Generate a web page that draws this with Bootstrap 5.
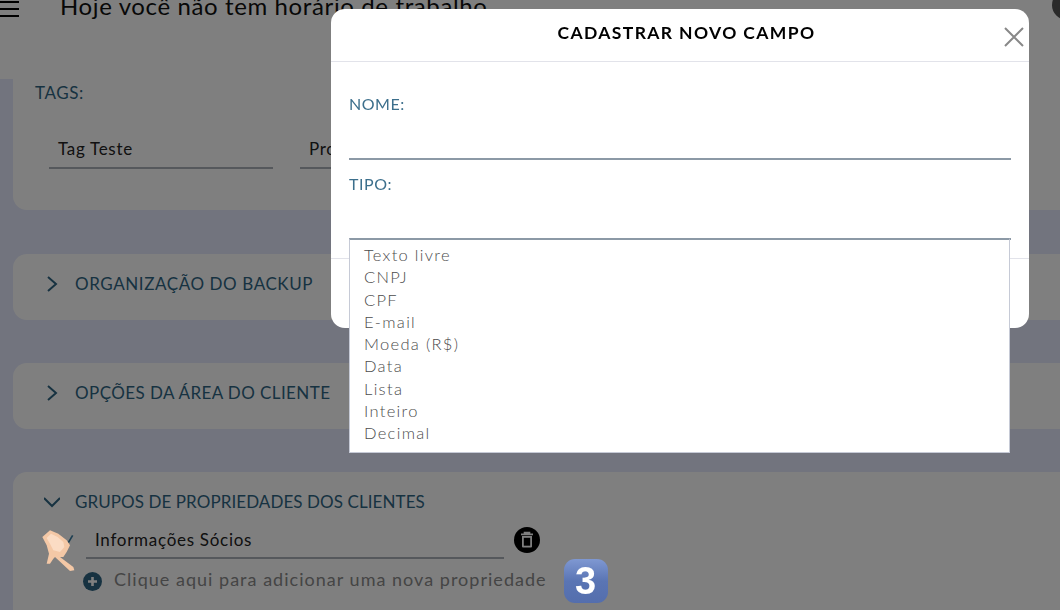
<!DOCTYPE html>
<html lang="pt-BR">

<head>
  <meta charset="UTF-8" />
  <meta name="viewport" content="width=device-width, initial-scale=1" />
  <title>Cadastrar novo campo</title>
  <link href="https://cdn.jsdelivr.net/npm/bootstrap@5.3.3/dist/css/bootstrap.min.css" rel="stylesheet">
  <style>
    html, body { height: 610px; overflow: hidden; }
    body { background: #e4e8fc; font-family: "Lato", "Liberation Sans", sans-serif; color: #000; }
    .topo { height: 79px; background: #fefeff; overflow: hidden; }
    .topo-menu { width: 19px; }
    .topo-titulo { font-size: 24px; line-height: 30px; margin: -9px 0 0 41px; letter-spacing: .62px; color: #111; white-space: nowrap; }
    .topo-avatar { width: 30px; height: 30px; background: #555; top: -10px; left: 1052px; }
    .conteudo { width: 1100px; padding-left: 13px; }
    .painel { background: #fff; }
    .painel-tags { height: 131px; padding: 3px 0 0 22px; border-radius: 0 0 0 14px; margin-bottom: 44px; }
    .painel-fechado { height: 66px; border-radius: 14px 0 0 14px; margin-bottom: 43px; padding: 0 0 7px 31px; }
    .painel-grupos { height: 160px; border-radius: 14px 0 0 0; padding: 19px 0 0 31px; }
    .rotulo { font-size: 17px; line-height: 22px; color: #2f6583; letter-spacing: .6px; }
    .campo { border-bottom: 2px solid #aab0b8; font-size: 17px; line-height: 24px; color: #222; padding: 0 0 6px 9px; letter-spacing: .7px; overflow: hidden; white-space: nowrap; }
    .campo-a { width: 224px; margin: 9px 0 0 14px; }
    .campo-b { width: 224px; margin: 9px 0 0 27px; }
    .secao { font-size: 17px; color: #2f6583; line-height: 22px; }
    .secao-largo { letter-spacing: .58px; }
    .secao-medio { letter-spacing: .42px; }
    .secao-curto { letter-spacing: .08px; }
    .seta { width: 16px; height: 16px; margin-right: 15px; flex: none; }
    .grupo-linha { margin-top: 15px; margin-left: 42px; }
    .campo-c { width: 418px; padding-bottom: 5px; letter-spacing: .72px; }
    .lixo { width: 26px; height: 26px; margin: -1px 0 0 10px; flex: none; }
    .nova { margin: 0 0 0 39px; font-size: 18px; color: #8a8a8a; letter-spacing: 1.02px; line-height: 28px; }
    .nova-texto { padding-bottom: 4px; }
    .mais { width: 19px; height: 19px; margin-right: 12px; flex: none; }
    .tecla { width: 44px; height: 44px; margin: 0 0 0 17px; border-radius: 11px; background: linear-gradient(#7f98d2, #5a75b4 50%, #546ead); color: #fff; font: 700 38px/44px "Liberation Sans", sans-serif; letter-spacing: 0; text-align: center; flex: none; position: relative; z-index: 1060; }
    .mao { left: 35px; top: 522px; width: 50px; height: 55px; z-index: 1060; }
    .modal-backdrop.show { opacity: .5; background: #000; }
    .janela { left: 331px; top: 9px; width: 698px; height: 319px; z-index: 1055; border-radius: 14px; background: #fff; overflow: hidden; }
    .janela .modal-header { height: 53px; padding: 0 6px 0 0; border-bottom: 1px solid #e2e3ea; flex: none; }
    .janela-titulo { font-size: 17.5px; font-weight: 700; letter-spacing: 1.37px; margin: -4px 0 0 0; line-height: 24px; width: 710px; text-align: center; padding-left: 1px; flex: none; }
    .fechar { width: 20px; height: 20px; margin: 3px 0 0 -37px; flex: none; }
    .janela .modal-body { padding: 0 18px; flex: none; height: 196px; }
    .janela .rotulo { padding-top: 31px; font-size: 16px; letter-spacing: .55px; color: #3c6f8c; }
    .entrada { height: 44px; border: 0; border-bottom: 2px solid #8c99a6; border-radius: 0; padding: 0; margin-top: 1px; background: #fff; }
    .janela .entrada + .rotulo { padding-top: 13px; margin-bottom: 1px; }
    .janela .modal-footer { border-top: 1px solid #e2e3ea; padding: 0; height: 69px; }
    .opcoes { left: 349px; top: 238px; width: 661px; height: 215px; z-index: 1056; background: #fff; border: 1px solid #c6cad6; border-top: 2px solid #8c99a6; padding: 4px 0 0; }
    .opcoes li { list-style: none; padding: 0 0 0 14px; font-size: 16.5px; line-height: 22.25px; font-weight: 300; color: #4c4c4c; letter-spacing: 1.3px; }
  </style>
</head>

<body>

  <header class="topo d-flex align-items-start position-relative">
    <svg class="topo-menu" viewBox="0 0 19 19" height="19">
      <path d="M0 2h19M0 9h19M0 16h19" stroke="#000" stroke-width="2.2" fill="none" />
    </svg>
    <h1 class="topo-titulo fw-normal">Hoje você não tem horário de trabalho</h1>
    <div class="topo-avatar rounded-circle position-absolute"></div>
  </header>

  <main class="conteudo">
    <section class="painel painel-tags">
      <div class="rotulo">TAGS:</div>
      <div class="d-flex mt-4">
        <div class="campo campo-a">Tag Teste</div>
        <div class="campo campo-b">Proprietário</div>
      </div>
    </section>

    <section class="painel painel-fechado d-flex align-items-center">
      <svg class="seta" viewBox="0 0 16 16"><path d="M4 1l8 7-8 7" fill="none" stroke="#2f6583" stroke-width="2" /></svg>
      <span class="secao secao-largo">ORGANIZAÇÃO DO BACKUP</span>
    </section>

    <section class="painel painel-fechado d-flex align-items-center">
      <svg class="seta" viewBox="0 0 16 16"><path d="M4 1l8 7-8 7" fill="none" stroke="#2f6583" stroke-width="2" /></svg>
      <span class="secao secao-medio">OPÇÕES DA ÁREA DO CLIENTE</span>
    </section>

    <section class="painel painel-grupos">
      <div class="d-flex align-items-center">
        <svg class="seta" viewBox="0 0 16 16"><path d="M0 4l8 8 8-8" fill="none" stroke="#2f6583" stroke-width="2" /></svg>
        <span class="secao secao-curto">GRUPOS DE PROPRIEDADES DOS CLIENTES</span>
      </div>
      <div class="d-flex grupo-linha">
        <div class="campo campo-c">Informações Sócios</div>
        <svg class="lixo" viewBox="0 0 26 26">
          <circle cx="13" cy="13" r="13" fill="#000" />
          <path d="M8 9h10v10.5a1 1 0 0 1-1 1H9a1 1 0 0 1-1-1z" fill="#fff" />
          <path d="M9.8 10.8h6.4v7.9H9.8z" fill="#000" />
          <path d="M7 7.4h12M10.5 7V5.6h5V7" fill="none" stroke="#fff" stroke-width="1.6" />
        </svg>
      </div>
      <div class="nova d-flex align-items-center">
        <svg class="mais" viewBox="0 0 19 19">
          <circle cx="9.5" cy="9.5" r="9.5" fill="#2f6583" />
          <path d="M9.5 5v9M5 9.5h9" stroke="#fff" stroke-width="2.6" />
        </svg>
        <span class="nova-texto">Clique aqui para adicionar uma nova propriedade</span>
        <div class="tecla">3</div>
      </div>
    </section>
  </main>

  <div class="modal-backdrop show"></div>

  <svg class="mao position-absolute" viewBox="0 0 150 165">
    <path d="M100 62L113 40" stroke="#1d3f52" stroke-width="5" fill="none" />
    <path d="M22 45 45 25 70 35 95 55 105 70 95 90 85 105 75 105 115 135 118 145 105 147 60 105 55 110 45 125 35 125 42 95 35 70z" fill="#f4c8a6" />
    <path d="M35 48 48 35 68 45 85 60 88 75 75 90 55 85 45 65z" fill="#fbdcc4" />
  </svg>

  <div class="modal-content janela position-absolute border-0">
    <div class="modal-header d-flex">
      <h2 class="janela-titulo">CADASTRAR NOVO CAMPO</h2>
      <svg class="fechar" viewBox="0 0 20 20"><path d="M1 1l18 18M19 1L1 19" stroke="#888" stroke-width="2" fill="none" /></svg>
    </div>
    <div class="modal-body">
      <div class="rotulo">NOME:</div>
      <div class="entrada form-control"></div>
      <div class="rotulo">TIPO:</div>
      <div class="entrada form-control"></div>
    </div>
    <div class="modal-footer"></div>
  </div>

  <ul class="opcoes position-absolute m-0">
    <li>Texto livre</li>
    <li>CNPJ</li>
    <li>CPF</li>
    <li>E-mail</li>
    <li>Moeda (R$)</li>
    <li>Data</li>
    <li>Lista</li>
    <li>Inteiro</li>
    <li>Decimal</li>
  </ul>

  <script src="https://cdn.jsdelivr.net/npm/bootstrap@5.3.3/dist/js/bootstrap.bundle.min.js"></script>
</body>

</html>
